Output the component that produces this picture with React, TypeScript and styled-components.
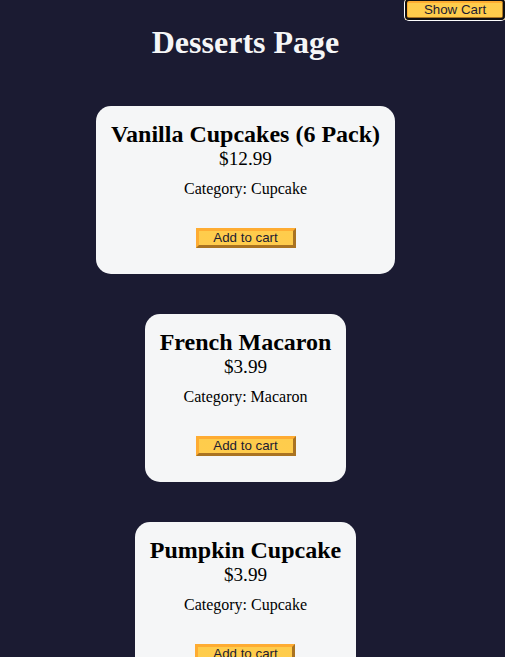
import React from "react";
import styled, { createGlobalStyle } from "styled-components";

const GlobalStyle = createGlobalStyle`
  *, *::before, *::after { margin: 0; padding: 0; box-sizing: border-box; }
  body {
    background-color: #1b1b32;
    font-family: "Liberation Serif", "Times New Roman", serif;
    padding-right: 14px;
  }
`;

const Title = styled.h1`
  color: #f5f6f7;
  text-align: center;
  margin: 24px 0 25px;
  font-size: 32px;
  font-weight: bold;
`;

const Button = styled.button`
  display: block;
  cursor: pointer;
  width: 100px;
  color: #1b1b32;
  background-color: #feac32;
  background-image: linear-gradient(#fecc4c, #ffcc4c);
  border: 3px outset #feac32;
  font-family: "Liberation Sans", Arial, sans-serif;
  font-size: 13.333px;
  line-height: 14px;
`;

const CartButton = styled(Button)`
  position: absolute;
  top: 0;
  right: 0;
  &::after {
    content: "";
    position: absolute;
    inset: -4px -3px -3px -3px;
    border: 2px solid #101010;
    border-radius: 4px;
    box-shadow: 0 0 0 1px #fff;
    pointer-events: none;
  }
`;

const AddButton = styled(Button)`
  margin: 30px auto 11px;
`;

const CardList = styled.div`
  display: flex;
  flex-direction: column;
  align-items: center;
`;

const Card = styled.div`
  background-color: #f5f6f7;
  padding: 15px;
  text-align: center;
  border-radius: 15px;
  margin: 20px;
`;

const Name = styled.h2`
  font-size: 24px;
  font-weight: bold;
`;

const Price = styled.p`
  font-size: 19.2px;
`;

const Category = styled.p`
  font-size: 16px;
  margin: 10px 0;
`;

const desserts = [
  { name: "Vanilla Cupcakes (6 Pack)", price: 12.99, category: "Cupcake" },
  { name: "French Macaron", price: 3.99, category: "Macaron" },
  { name: "Pumpkin Cupcake", price: 3.99, category: "Cupcake" },
  { name: "Chocolate Cupcake", price: 5.99, category: "Cupcake" },
];

export default function App() {
  return (
    <>
      <GlobalStyle />
      <header>
        <Title>Desserts Page</Title>
      </header>
      <main>
        <CartButton type="button">Show Cart</CartButton>
        <CardList>
          {desserts.map((d) => (
            <Card key={d.name}>
              <Name>{d.name}</Name>
              <Price>${d.price.toFixed(2)}</Price>
              <Category>Category: {d.category}</Category>
              <AddButton type="button">Add to cart</AddButton>
            </Card>
          ))}
        </CardList>
      </main>
    </>
  );
}
